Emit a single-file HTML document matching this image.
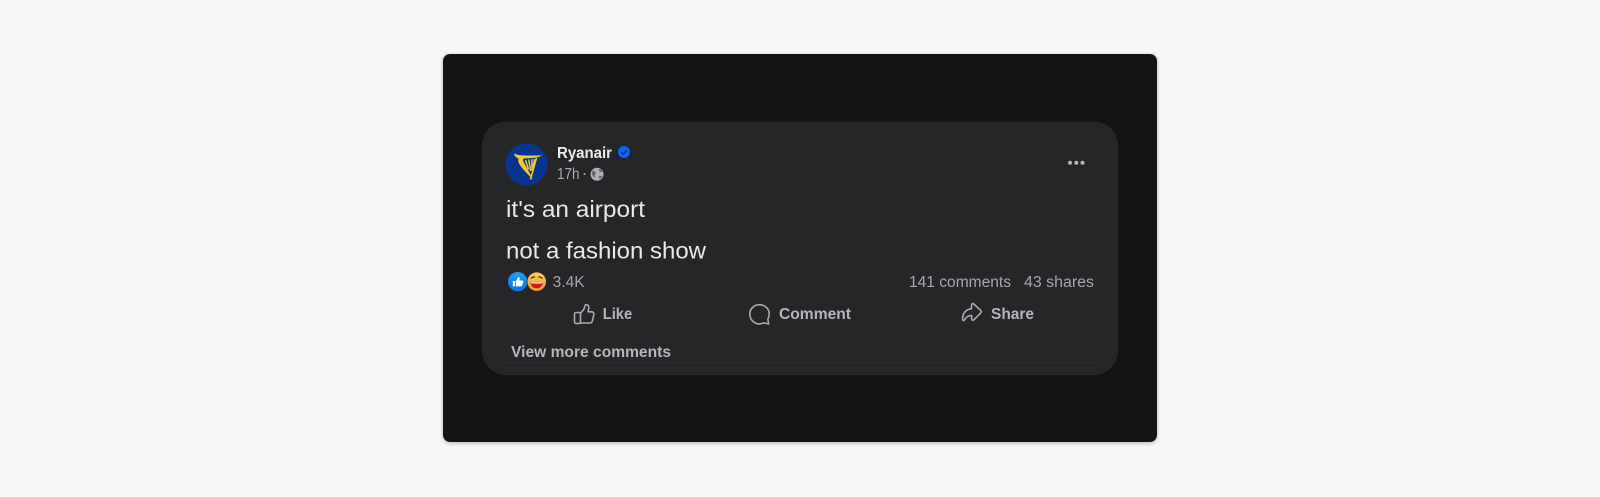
<!DOCTYPE html>
<html><head><meta charset="utf-8"><style>
html,body{margin:0;padding:0;background:#f6f7f9;width:1600px;height:497px;overflow:hidden}
svg{display:block;position:absolute;left:0;top:0;filter:blur(.35px)}
text{font-family:"Liberation Sans",sans-serif}
.b{font-weight:700;font-size:15.5px;fill:#b4b6ba}
.r{font-size:15.5px;fill:#a6a8ac}
.p{font-size:23px;fill:#e8e9eb}
</style></head><body>
<svg width="1600" height="497" viewBox="0 0 1600 497" xmlns="http://www.w3.org/2000/svg">
<defs>
<filter id="s" x="-5%" y="-5%" width="110%" height="110%"><feGaussianBlur stdDeviation="2"/></filter>
<linearGradient id="lk" x1="0" y1="0" x2="0" y2="1"><stop offset="0" stop-color="#1ea0fb"/><stop offset="1" stop-color="#0b6fe8"/></linearGradient>
<linearGradient id="hh" x1="0" y1="0" x2="0" y2="1"><stop offset="0" stop-color="#fbd053"/><stop offset="1" stop-color="#ed9a2c"/></linearGradient>
</defs>
<rect x="443" y="55" width="714" height="388" rx="7" fill="#000" opacity=".28" filter="url(#s)"/>
<rect x="443" y="54" width="714" height="388" rx="7" fill="#141414"/>
<rect x="482" y="121.500" width="636" height="253.500" rx="24" fill="#252628"/>
<line x1="502" y1="362.500" x2="1098" y2="362.500" stroke="#2b2c2e"/>
<!-- logo -->
<circle cx="526.700" cy="164.300" r="21" fill="#073590"/>
<path d="M514 153.500c2 1 4.500 1.500 7 1.800 7 .4 14 .2 21.200.2-2.500 1.200-5 2-7.500 2.300l-11.500.8c-.5 1.500 0 2.800 1 4.500 2.500 4.500 5.500 9.500 8.800 16.700-5.500-6-10.500-10.500-13.500-15.500-1.300-2.200-1.600-4-1-5.800-2.500-1-4.200-2.800-4.500-4.800z" fill="#f1c933"/>
<path d="M536.500 158l-6 21.500" stroke="#f1c933" stroke-width="1.500" fill="none"/>
<path d="M525.500 160l3 9.500M528.700 159.500l2 11.500M531.800 159.200l.3 11.500M534.500 159l-1.500 9" stroke="#f1c933" stroke-width="1.500" fill="none"/>
<text x="557" y="158" class="b" style="fill:#eceded" textLength="55" lengthAdjust="spacingAndGlyphs">Ryanair</text>
<circle cx="624" cy="152" r="6" fill="#0866ff"/>
<path d="M621.300 152.200l2 2 3.500-3.800" stroke="#1b2a44" stroke-width="1.400" fill="none"/>
<text x="557" y="179" class="r" style="fill:#a9abaf" textLength="22.500" lengthAdjust="spacingAndGlyphs">17h</text>
<circle cx="584.500" cy="174" r="1" fill="#a9abaf"/>
<!-- globe -->
<circle cx="597" cy="174.300" r="6.500" fill="#aeb0b4"/>
<path d="M592.500 170.800c1.600.2 2.800.9 3.200 2 .3 1-.6 1.300-.9 2.100s.4 1.600 0 2.800c-1.200-.7-2.300-2.400-2.800-4zM599 169c1.500.4 2.700 1.300 3.300 2.400l-1.800.8c-1.100-.6-1.900-2-1.500-3.200zM599.300 175.800l2.700.5c-.4 1.300-1.200 2.200-2.300 2.800-.6-1-.8-2.400-.4-3.300z" fill="#5e6063"/>
<!-- dots -->
<circle cx="1070" cy="162.700" r="2" fill="#b6b8bb"/><circle cx="1076.300" cy="162.700" r="2" fill="#b6b8bb"/><circle cx="1082.500" cy="162.700" r="2" fill="#b6b8bb"/>
<!-- post text -->
<text x="506" y="217" class="p" textLength="139" lengthAdjust="spacingAndGlyphs">it's an airport</text>
<text x="506" y="258.500" class="p" textLength="200" lengthAdjust="spacingAndGlyphs">not a fashion show</text>
<!-- reactions -->
<circle cx="517.700" cy="281.700" r="9.700" fill="url(#lk)"/>
<path d="M512.800 281h2.400v5.400h-2.400zM516 281l2.300-4c1.300-.2 1.800 1 1.400 2.300l-.3 1.200h2.800c1 0 1.300 1 1 1.700l-1 3.300c-.2.600-.6.900-1.200.9H516z" fill="#fff"/>
<circle cx="536.700" cy="281.700" r="10" fill="#252628"/>
<circle cx="536.700" cy="281.700" r="9.300" fill="url(#hh)"/>
<path d="M530.500 282.300c4 .6 8.400.6 12.400 0-.3 3.700-2.700 6-6.200 6s-5.900-2.300-6.200-6z" fill="#d3152c"/>
<path d="M530.900 282.300c3.800.6 7.800.6 11.600 0l-.3.9c-3.600.5-7.400.5-11 0z" fill="#fff"/>
<path d="M530.800 278.500l3-1.800 1 .6M542.600 278.500l-3-1.800-1 .6" stroke="#4a3410" stroke-width="1.200" fill="none"/>
<text x="552.700" y="287" class="r" textLength="32" lengthAdjust="spacingAndGlyphs">3.4K</text>
<text x="909" y="287" class="r" textLength="102" lengthAdjust="spacingAndGlyphs">141 comments</text>
<text x="1024" y="287" class="r" textLength="70" lengthAdjust="spacingAndGlyphs">43 shares</text>
<!-- like -->
<g fill="none" stroke="#a9abae" stroke-width="1.600" stroke-linejoin="round">
<rect x="574.500" y="312.500" width="6" height="11" rx="1.500"/>
<path d="M580.500 313.500l3.500-4.500 1-3.300c.3-1 1.200-1.300 2-1 1.400.5 2 1.700 1.800 3.300l-.8 3.800h3.500c1.700 0 2.700 1.300 2.300 3l-1.400 6c-.3 1.400-1.300 2.200-2.700 2.200h-9.200"/>
</g>
<text x="602.700" y="319" class="b" textLength="29.500" lengthAdjust="spacingAndGlyphs">Like</text>
<!-- comment -->
<path d="M759.500 304.700c5.400 0 9.700 4 9.700 9.200 0 2.400-.8 4.200-1.400 5.400l.9 4.700-4.800-1.100c-1.300.6-2.800 1-4.400 1-5.400 0-9.700-4.400-9.700-9.800s4.300-9.400 9.700-9.400z" fill="none" stroke="#a9abae" stroke-width="1.600" stroke-linejoin="round"/>
<text x="779" y="319" class="b" textLength="72" lengthAdjust="spacingAndGlyphs">Comment</text>
<!-- share -->
<path d="M971.500 305.300c0-1.700 1.200-2.200 2.300-1.300l6.800 6.300c1 .9 1 1.800 0 2.800l-6.500 6.500c-1.200 1.100-2.500.6-2.500-1v-3c-3.800-.2-5.500 1.500-7 4.200-.6 1.200-2 .9-2-.5-.3-6.500 3.800-10 8.900-10.600z" fill="none" stroke="#a9abae" stroke-width="1.600" stroke-linejoin="round"/>
<text x="991" y="319" class="b" textLength="43" lengthAdjust="spacingAndGlyphs">Share</text>
<text x="511" y="357" class="b" textLength="160" lengthAdjust="spacingAndGlyphs">View more comments</text>
</svg>
</body></html>
